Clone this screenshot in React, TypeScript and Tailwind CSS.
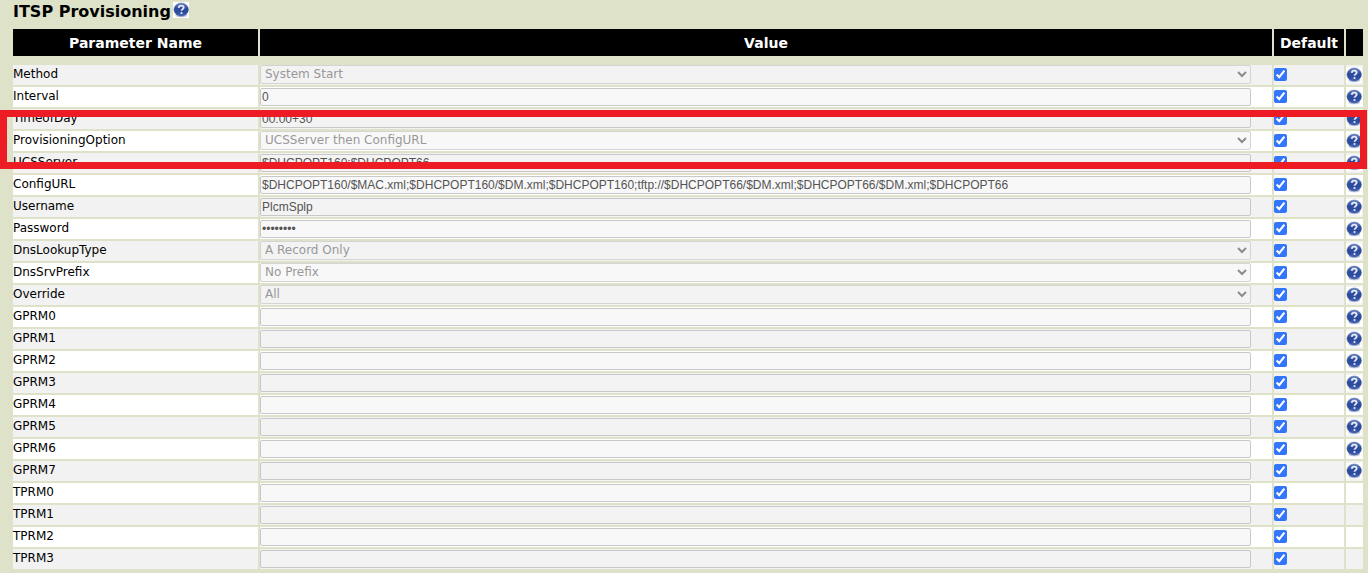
import React, { useState } from "react";

type Param = {
  name: string;
  value?: string;
  type?: "text" | "password" | "select";
  help?: boolean;
};

const params: Param[] = [
  { name: "Method", value: "System Start", type: "select" },
  { name: "Interval", value: "0" },
  { name: "TimeofDay", value: "00:00+30" },
  { name: "ProvisioningOption", value: "UCSServer then ConfigURL", type: "select" },
  { name: "UCSServer", value: "$DHCPOPT160;$DHCPOPT66" },
  {
    name: "ConfigURL",
    value:
      "$DHCPOPT160/$MAC.xml;$DHCPOPT160/$DM.xml;$DHCPOPT160;tftp://$DHCPOPT66/$DM.xml;$DHCPOPT66/$DM.xml;$DHCPOPT66",
  },
  { name: "Username", value: "PlcmSplp" },
  { name: "Password", value: "password", type: "password" },
  { name: "DnsLookupType", value: "A Record Only", type: "select" },
  { name: "DnsSrvPrefix", value: "No Prefix", type: "select" },
  { name: "Override", value: "All", type: "select" },
  { name: "GPRM0" },
  { name: "GPRM1" },
  { name: "GPRM2" },
  { name: "GPRM3" },
  { name: "GPRM4" },
  { name: "GPRM5" },
  { name: "GPRM6" },
  { name: "GPRM7" },
  { name: "TPRM0", help: false },
  { name: "TPRM1", help: false },
  { name: "TPRM2", help: false },
  { name: "TPRM3", help: false },
];

const HelpIcon = () => (
  <svg viewBox="0 0 16 16" className="block size-4 bg-white">
    <defs>
      <linearGradient id="ball" x1="0" y1="0" x2="0" y2="1">
        <stop offset="0" stopColor="#6f8ac4" />
        <stop offset="0.4" stopColor="#2f4d9e" />
        <stop offset="0.7" stopColor="#2c4a9c" />
        <stop offset="1" stopColor="#4a6cc0" />
      </linearGradient>
    </defs>
    <ellipse cx="8.3" cy="13.4" rx="6" ry="1.9" fill="#c9cddd" />
    <ellipse cx="8.2" cy="7.6" rx="7.3" ry="6.6" fill="url(#ball)" stroke="#3a5499" strokeWidth="0.4" />
    <path
      d="M5.7 5.8C5.9 4.4 6.9 3.6 8.2 3.6c1.5 0 2.5.8 2.5 2 0 1.5-2.2 1.6-2.2 3.2"
      fill="none"
      stroke="#e8ecf6"
      strokeWidth="1.8"
    />
    <circle cx="8.5" cy="11" r="1.1" fill="#e8ecf6" />
  </svg>
);

type FieldProps = { param: Param; striped: boolean; disabled: boolean };

const ValueField = ({ param, striped, disabled }: FieldProps) => {
  const fill = striped ? "bg-[#f3f3f3]" : "bg-[#f8f8f8]";

  if (param.type === "select") {
    return (
      <div className="relative">
        <select
          id={param.name}
          disabled={disabled}
          className={`${fill} block h-[19px] w-full appearance-none rounded-xs border border-[#d4d4d4] pb-0.5 pl-1 text-[12px] leading-4 enabled:text-black disabled:text-[#989898]`}
        >
          <option>{param.value}</option>
        </select>
        <svg
          viewBox="0 0 10 7"
          className="pointer-events-none absolute top-1.5 right-1 h-[7px] w-2.5"
          fill="none"
          stroke="#8c8c8c"
          strokeWidth="2"
        >
          <path d="M1 1l4 4 4-4" />
        </svg>
      </div>
    );
  }

  return (
    <input
      id={param.name}
      type={param.type ?? "text"}
      defaultValue={param.value}
      disabled={disabled}
      className={`${fill} mt-px block h-[18px] w-full rounded-xs border border-[#c8c8cb] px-px font-['Liberation_Sans',Arial,sans-serif] text-[12px] leading-4 enabled:text-black disabled:text-[#545454]`}
    />
  );
};

const ParamRow = ({ param, striped }: { param: Param; striped: boolean }) => {
  const [isDefault, setIsDefault] = useState(true);

  return (
    <tr className={striped ? "h-5 *:bg-[#f2f2f2] *:p-0 *:align-top" : "h-5 *:bg-white *:p-0 *:align-top"}>
      <td>
        <label htmlFor={param.name} className="block leading-[18px]">
          {param.name}
        </label>
      </td>
      <td>
        <div className="mr-[21px]">
          <ValueField param={param} striped={striped} disabled={isDefault} />
        </div>
      </td>
      <td>
        <input
          type="checkbox"
          aria-label={`${param.name} default`}
          checked={isDefault}
          onChange={(e) => setIsDefault(e.target.checked)}
          className="mt-[3px] block size-[13px] accent-[#3375fb]"
        />
      </td>
      <td>
        {param.help !== false && (
          <a href={`#${param.name}`} aria-label={`${param.name} help`} className="block pt-0.5">
            <HelpIcon />
          </a>
        )}
      </td>
    </tr>
  );
};

const App = () => {
  return (
    <div className="relative min-h-screen bg-[#dde2c9] pr-[3px] pl-[11px] font-[Verdana,'DejaVu_Sans',sans-serif] text-[12px] text-black">
      {/* Title */}
      <div className="flex h-[27px] items-start gap-0.5 pt-0.5 pl-0.5">
        <h1 className="text-[16px] leading-5 font-bold">ITSP Provisioning</h1>
        <a href="#itsp" aria-label="ITSP Provisioning help">
          <HelpIcon />
        </a>
      </div>

      {/* Parameters */}
      <table className="w-full table-fixed border-separate border-spacing-0.5">
        <colgroup>
          <col className="w-[245px]" />
          <col />
          <col className="w-[70px]" />
          <col className="w-[17px]" />
        </colgroup>
        <thead>
          <tr className="h-[27px] text-[14px] leading-5 text-white *:bg-black *:p-0">
            <th>Parameter Name</th>
            <th>Value</th>
            <th>Default</th>
            <th></th>
          </tr>
        </thead>
        <tbody>
          <tr className="h-[5px]">
            <td colSpan={4} className="p-0"></td>
          </tr>
          {params.map((param, i) => (
            <ParamRow key={param.name} param={param} striped={i % 2 === 0} />
          ))}
        </tbody>
      </table>

      {/* Highlighted option */}
      <div className="pointer-events-none absolute top-[110px] right-px left-0 h-[59px] border-[7px] border-[#ed1c24]" />
    </div>
  );
};

export default App;
